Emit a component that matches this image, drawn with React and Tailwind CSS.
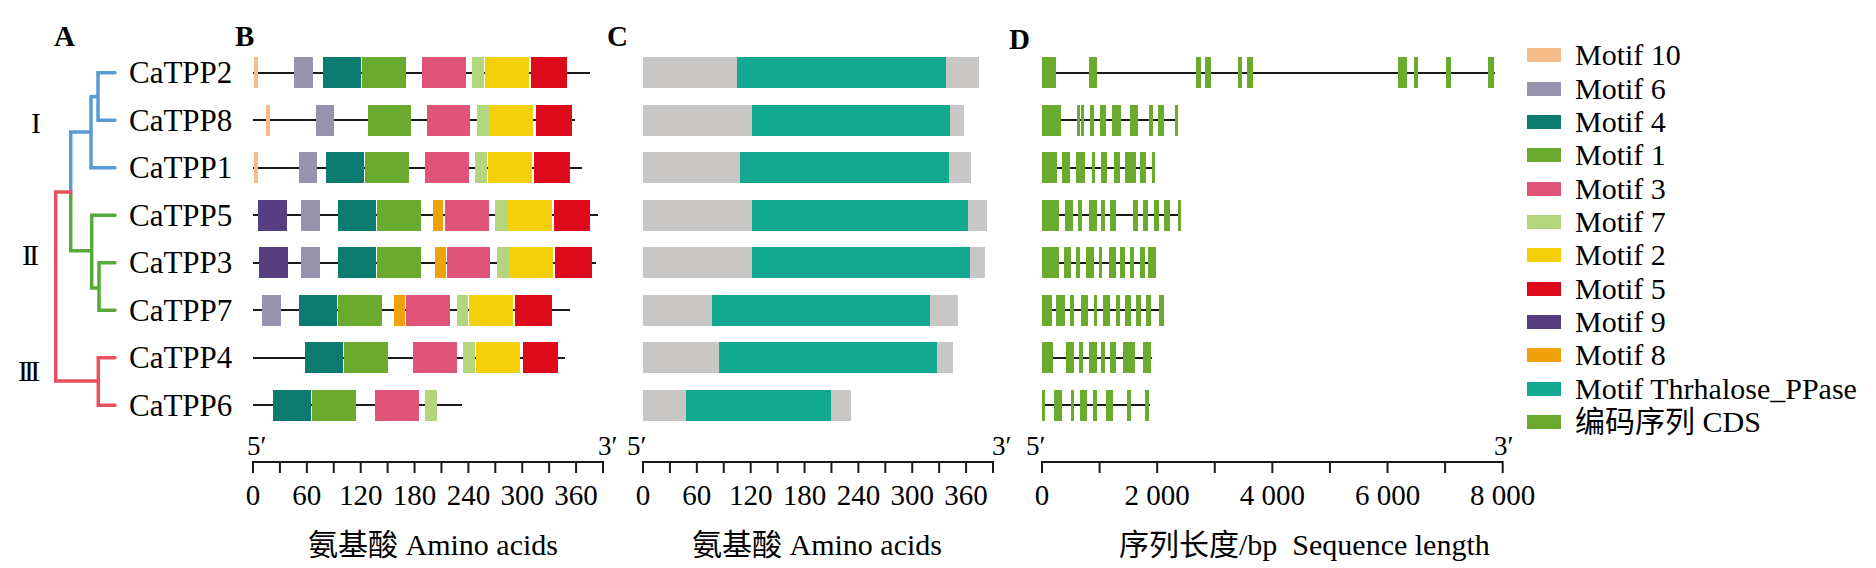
import React from "react";

// motif colours, shared by the boxes in B and the legend
const MOTIF = {
  m10: "bg-[#f6bd8a]",
  m6: "bg-[#9893ad]",
  m4: "bg-[#0c7b70]",
  m1: "bg-[#6aaa2e]",
  m3: "bg-[#e05577]",
  m7: "bg-[#b3d67c]",
  m2: "bg-[#f4d00a]",
  m5: "bg-[#dc0a1a]",
  m9: "bg-[#573e80]",
  m8: "bg-[#f0a10c]",
};

const LEGEND = [
  ["Motif 10", "bg-[#f6bd8a]"],
  ["Motif 6", "bg-[#9893ad]"],
  ["Motif 4", "bg-[#0c7b70]"],
  ["Motif 1", "bg-[#6aaa2e]"],
  ["Motif 3", "bg-[#e05577]"],
  ["Motif 7", "bg-[#b3d67c]"],
  ["Motif 2", "bg-[#f4d00a]"],
  ["Motif 5", "bg-[#dc0a1a]"],
  ["Motif 9", "bg-[#573e80]"],
  ["Motif 8", "bg-[#f0a10c]"],
  ["Motif Thrhalose_PPase", "bg-[#13a890]"],
  ["编码序列 CDS", "bg-[#6aaa2e]"],
];

const GENES = ["CaTPP2", "CaTPP8", "CaTPP1", "CaTPP5", "CaTPP3", "CaTPP7", "CaTPP4", "CaTPP6"];

// panel B: protein length (px) and motif boxes [start, end, motif]
const MOTIFS = [
  { len: 337, boxes: [[1, 5, "m10"], [41.3, 59.7, "m6"], [69.7, 108.3, "m4"], [109, 153, "m1"], [169.3, 213, "m3"], [219.3, 231, "m7"], [231.7, 276, "m2"], [278.3, 314.3, "m5"]] },
  { len: 322, boxes: [[12.7, 17, "m10"], [62.7, 81.3, "m6"], [114.7, 158.3, "m1"], [173.7, 217.3, "m3"], [224, 235.7, "m7"], [236.3, 280.3, "m2"], [282.7, 319, "m5"]] },
  { len: 329, boxes: [[1, 5, "m10"], [45.7, 64.3, "m6"], [72.7, 111, "m4"], [112, 155.7, "m1"], [172, 215.7, "m3"], [222, 233.7, "m7"], [234.7, 279, "m2"], [281.3, 317, "m5"]] },
  { len: 345, boxes: [[5.3, 33.7, "m9"], [48.3, 67, "m6"], [85, 123.3, "m4"], [124.3, 168.3, "m1"], [180, 190.3, "m8"], [191.7, 235.7, "m3"], [241.7, 253.7, "m7"], [254.3, 298.7, "m2"], [300.7, 337, "m5"]] },
  { len: 343.4, boxes: [[6.3, 34.7, "m9"], [48.3, 67, "m6"], [85, 123.3, "m4"], [124.3, 168.3, "m1"], [181.7, 192.7, "m8"], [193.7, 237, "m3"], [243.7, 255.7, "m7"], [256.3, 300.3, "m2"], [302.3, 338.7, "m5"]] },
  { len: 317, boxes: [[9, 27.7, "m6"], [45.7, 84.3, "m4"], [85.3, 129, "m1"], [141.3, 152.3, "m8"], [153, 197.3, "m3"], [203.7, 215.3, "m7"], [215.7, 260, "m2"], [262.3, 298.7, "m5"]] },
  { len: 312, boxes: [[51.7, 90.3, "m4"], [91.3, 135, "m1"], [160.3, 204.3, "m3"], [210.3, 222, "m7"], [222.7, 267, "m2"], [269.7, 305.3, "m5"]] },
  { len: 209, boxes: [[19.7, 58.3, "m4"], [59.3, 103, "m1"], [122, 165.7, "m3"], [172, 183.7, "m7"]] },
];

// panel C: [total, domain start, domain end]
const DOMAINS = [
  [335.7, 94, 303],
  [320.7, 109, 307.3],
  [327.7, 96.7, 305.7],
  [343.7, 109, 325.3],
  [342, 109, 327],
  [315.3, 69.3, 287],
  [310.3, 75.7, 294.3],
  [207.7, 43.3, 188],
];

// panel D: gene length and exons
const EXONS = [
  { len: 452.7, ex: [[0, 14.3], [47, 55.3], [153.7, 158.7], [163, 169], [196.3, 200], [205, 211.3], [356, 365], [371.7, 375.7], [403.7, 409], [445.7, 452]] },
  { len: 136, ex: [[0, 18.7], [35.3, 37.3], [39, 41.3], [47.7, 52], [58.3, 64.3], [70.3, 79.3], [87.7, 96.3], [107, 111], [115.7, 121.7], [133.3, 136]] },
  { len: 113.3, ex: [[0, 15], [20, 28.3], [33.7, 43.3], [49.7, 53.3], [58.7, 65], [72.3, 77.7], [83.3, 93.7], [97.7, 103.7], [109.7, 113.3]] },
  { len: 139.3, ex: [[0, 17.3], [23.3, 31], [35.7, 40], [47, 55], [59.3, 63.3], [67.7, 74.3], [91, 96], [101, 106], [111.7, 116.7], [122, 127.7], [136, 139.3]] },
  { len: 114.3, ex: [[0, 17.3], [21.7, 29.3], [34, 37.7], [44, 51.7], [57, 60.3], [67, 73.7], [78.3, 83], [87.7, 92.3], [97.7, 102.7], [105.7, 114.3]] },
  { len: 122, ex: [[0, 10], [14.3, 22.7], [27.7, 31.7], [38.7, 46], [52, 55.3], [61.3, 67.7], [74.3, 77.7], [83, 88.7], [94, 98.7], [104.3, 109.3], [116.7, 122]] },
  { len: 110.3, ex: [[0, 10.7], [23.7, 32.3], [36.7, 41], [46.7, 55], [59, 62.7], [68.3, 74.3], [80.7, 93.3], [100.7, 109.3]] },
  { len: 107.7, ex: [[0, 2.3], [12, 20], [28.7, 31.7], [38.3, 45.3], [51, 54.7], [64.3, 70.7], [85.3, 89], [103.3, 107]] },
];

const AA_LABELS = [[0, "0"], [2, "60"], [4, "120"], [6, "180"], [8, "240"], [10, "300"], [12, "360"]];
const BP_LABELS = [[0, "0"], [2, "2 000"], [4, "4 000"], [6, "6 000"], [8, "8 000"]];

const Header = ({ letter, className = "" }) => (
  <div className={"h-[49px] text-[29px] font-bold leading-none " + className}>{letter}</div>
);

const Axis = ({ width, ticks, labels, five, three, title, titleLeft }) => {
  const step = width / (ticks - 1);
  return (
    <div className="flex flex-col" style={{ width }}>
      <div className="relative h-[32px] text-[27px] leading-none">
        <span className="absolute top-[4px]" style={{ left: five }}>5′</span>
        <span className="absolute top-[4px]" style={{ left: three }}>3′</span>
      </div>
      <svg width={width} height={12} className="overflow-visible">
        <line x1={0} x2={width} y1={1} y2={1} stroke="#1a1a1a" strokeWidth={2} />
        {Array.from({ length: ticks }, (_, i) => (
          <line key={i} x1={i * step} x2={i * step} y1={0} y2={12} stroke="#1a1a1a" strokeWidth={2} />
        ))}
      </svg>
      <div className="relative h-[48px] text-[29px] leading-none">
        {labels.map(([i, t]) => (
          <span key={t} className="absolute top-[8px] -translate-x-1/2 whitespace-nowrap" style={{ left: i * step }}>
            {t}
          </span>
        ))}
      </div>
      <div className="mt-[9px] whitespace-pre text-[30px] leading-[30px]" style={{ marginLeft: titleLeft }}>
        {title}
      </div>
    </div>
  );
};

const Tree = () => (
  <svg width="128" height="380" className="absolute left-0 top-0" fill="none" strokeWidth="3.5" strokeLinecap="round">
    <path d="M115 23.75 H98 V71.25 H115 M98 47.5 H91 M115 118.75 H91 V47.5 M91 83 H70.7 V143" stroke="#5b9bd5" />
    <path d="M70.7 143 V201.7 H91.7 M115 166.25 H91.7 V239 H99 M115 213.75 H99 V261.25 H115" stroke="#58a93c" />
    <path d="M70.7 143 H55.7 V332 H98.3 M115 308.75 H98.3 V356.25 H115" stroke="#e8505f" />
  </svg>
);

export default function App() {
  return (
    <div className="flex h-[568px] w-[1876px] overflow-hidden bg-white text-black font-[family-name:'Liberation_Serif','Noto_Sans_CJK_SC',serif]">
      {/* A: tree and names */}
      <div className="w-[228px] shrink-0">
        <Header letter="A" className="pl-[54px] pt-[22px]" />
        <div className="relative">
          <Tree />
          <span className="absolute left-[31px] top-[59px] text-[30px] leading-none">I</span>
          <span className="absolute left-[22px] top-[191px] text-[30px] leading-none tracking-[-0.1em]">II</span>
          <span className="absolute left-[18px] top-[307px] text-[30px] leading-none tracking-[-0.13em]">III</span>
          {GENES.map((g) => (
            <div key={g} className="flex h-[47.5px] items-center whitespace-nowrap pl-[129px] text-[31px] leading-none">
              {g}
            </div>
          ))}
        </div>
      </div>

      {/* B: motifs */}
      <div className="w-[379px] shrink-0">
        <Header letter="B" className="pl-[7px] pt-[22px]" />
        <div className="pl-[25px]">
          {MOTIFS.map((row, r) => (
            <div key={r} className="flex h-[47.5px] items-center">
              <div className="relative h-[31px] w-[350px]">
                <div className="absolute left-0 top-1/2 h-[2px] -translate-y-1/2 bg-[#1a1a1a]" style={{ width: row.len }} />
                {row.boxes.map(([s, e, m], i) => (
                  <div key={i} className={"absolute inset-y-0 " + MOTIF[m]} style={{ left: s, width: e - s }} />
                ))}
              </div>
            </div>
          ))}
          <Axis width={350} ticks={14} labels={AA_LABELS} five={-6} three={345} title="氨基酸 Amino acids" titleLeft={55} />
        </div>
      </div>

      {/* C: domains */}
      <div className="w-[402px] shrink-0">
        <Header letter="C" className="pt-[22px]" />
        <div className="pl-[36px]">
          {DOMAINS.map(([len, s, e], r) => (
            <div key={r} className="flex h-[47.5px] items-center">
              <div className="relative h-[31px] bg-[#c8c7c5]" style={{ width: len }}>
                <div className="absolute inset-y-0 bg-[#13a890]" style={{ left: s, width: e - s }} />
              </div>
            </div>
          ))}
          <Axis width={350} ticks={14} labels={AA_LABELS} five={-16} three={349} title="氨基酸 Amino acids" titleLeft={49} />
        </div>
      </div>

      {/* D: gene structure */}
      <div className="w-[506px] shrink-0">
        <Header letter="D" className="pt-[25px]" />
        <div className="pl-[33px]">
          {EXONS.map((row, r) => (
            <div key={r} className="flex h-[47.5px] items-center">
              <div className="relative h-[31px] w-[461px]">
                <div className="absolute left-0 top-1/2 h-[2px] -translate-y-1/2 bg-[#1a1a1a]" style={{ width: row.len }} />
                {row.ex.map(([s, e], i) => (
                  <div key={i} className="absolute inset-y-0 bg-[#6aaa2e]" style={{ left: s, width: Math.max(e - s, 2.5) }} />
                ))}
              </div>
            </div>
          ))}
          <Axis width={460.7} ticks={9} labels={BP_LABELS} five={-16} three={452} title="序列长度/bp  Sequence length" titleLeft={77} />
        </div>
      </div>

      {/* legend */}
      <div className="flex-1 pl-[12px] pt-[38.6px]">
        {LEGEND.map(([label, color]) => (
          <div key={label} className="flex h-[33.33px] items-center whitespace-pre">
            <div className={"h-[14px] w-[34px] shrink-0 " + color} />
            <span className="ml-[14px] text-[30px] leading-none">{label}</span>
          </div>
        ))}
      </div>
    </div>
  );
}
